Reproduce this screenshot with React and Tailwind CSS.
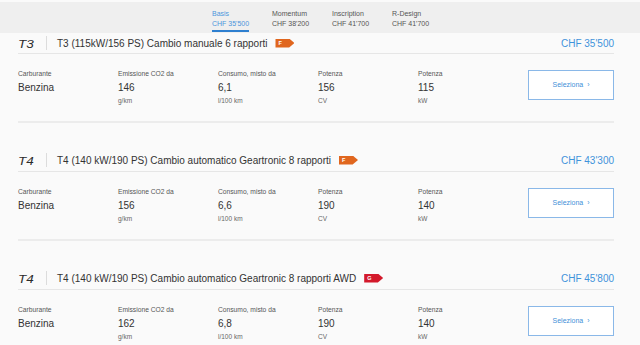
import React from 'react';

const tabs = [
    { name: 'Basis', price: "CHF 35'500", active: true },
    { name: 'Momentum', price: "CHF 38'200" },
    { name: 'Inscription', price: "CHF 41'700" },
    { name: 'R-Design', price: "CHF 41'700" },
];

const engines = [
    {
        logo: 'T3',
        title: 'T3 (115kW/156 PS) Cambio manuale 6 rapporti',
        badge: 'F',
        badgeColor: 'bg-[#e0661e]',
        price: "CHF 35'500",
        specs: ['146', '6,1', '156', '115'],
    },
    {
        logo: 'T4',
        title: 'T4 (140 kW/190 PS) Cambio automatico Geartronic 8 rapporti',
        badge: 'F',
        badgeColor: 'bg-[#e0661e]',
        price: "CHF 43'300",
        specs: ['156', '6,6', '190', '140'],
    },
    {
        logo: 'T4',
        title: 'T4 (140 kW/190 PS) Cambio automatico Geartronic 8 rapporti AWD',
        badge: 'G',
        badgeColor: 'bg-[#d3192b]',
        price: "CHF 45'800",
        specs: ['162', '6,8', '190', '140'],
    },
];

const labels = ['Emissione CO2 da', 'Consumo, misto da', 'Potenza', 'Potenza'];
const units = ['g/km', 'l/100 km', 'CV', 'kW'];

function SpecCol({ label, value, unit }) {
    return (
        <div className="w-[100px] flex flex-col">
            <div className="text-[6.7px] leading-[8px] text-[#555]">{label}</div>
            <div className="mt-[4px] text-[10px] leading-[12px] text-[#333]">{value}</div>
            <div className="mt-[3px] h-[8px] text-[6.5px] leading-[8px] text-[#666]">{unit}</div>
        </div>
    );
}

function EngineRow({ engine, first }) {
    return (
        <div className={first ? '' : 'mt-[26px]'}>
            <div className={`flex items-center border-b border-[#e6e6e6] ${first ? 'h-[21px]' : 'h-[23px]'}`}>
                <span className="w-[18px]">
                    <span className="inline-block origin-left scale-x-[1.35] text-[10px] leading-none italic text-[#2a2a2a]">{engine.logo}</span>
                </span>
                <span className="ml-[10px] w-px h-[14px] bg-[#dcdcdc]"></span>
                <span className="ml-[10px] text-[10px] text-[#333]">{engine.title}</span>
                <span className={`ml-[8px] w-[19px] h-[9px] pl-[3px] flex items-center text-[5.5px] font-bold text-white ${engine.badgeColor} [clip-path:polygon(0_0,72%_0,100%_50%,72%_100%,0_100%)]`}>
                    {engine.badge}
                </span>
                <span className="ml-auto text-[10px] text-[#3f93db]">{engine.price}</span>
            </div>
            <div className="flex items-start pt-[16px] pb-[16px] border-b-2 border-[#ececec]">
                <SpecCol label="Carburante" value="Benzina" unit="" />
                {engine.specs.map((v, i) => (
                    <SpecCol key={i} label={labels[i]} value={v} unit={units[i]} />
                ))}
                <button className="ml-auto w-[86px] h-[30px] border-[1.5px] border-[#8ab8e8] bg-white text-[7px] text-[#3f8fd8] flex items-center justify-center">
                    Seleziona&nbsp;&nbsp;›
                </button>
            </div>
        </div>
    );
}

export default function App() {
    return (
        <div className="w-full h-[345px] overflow-hidden bg-[#fafafa]" style={{ fontFamily: '"Liberation Sans", Arial, sans-serif' }}>
            <div className="h-[33px] border-t-2 border-[#fafafa] bg-[#efefef] flex pl-[212px]">
                {tabs.map(tab => (
                    <div key={tab.name} className="w-[60px] pt-[7px] flex items-start">
                        <div className={`flex flex-col pb-[2px] ${tab.active ? 'border-b-2 border-[#2f80d0]' : ''}`}>
                            <span className={`text-[7px] leading-[9px] ${tab.active ? 'text-[#4a95dc]' : 'text-[#555]'}`}>{tab.name}</span>
                            <span className={`mt-[1px] text-[7px] leading-[9px] ${tab.active ? 'text-[#4a95dc]' : 'text-[#555]'}`}>{tab.price}</span>
                        </div>
                    </div>
                ))}
            </div>
            <div className="ml-[18px] w-[596px]">
                {engines.map((engine, i) => (
                    <EngineRow key={i} engine={engine} first={i === 0} />
                ))}
            </div>
        </div>
    );
}
